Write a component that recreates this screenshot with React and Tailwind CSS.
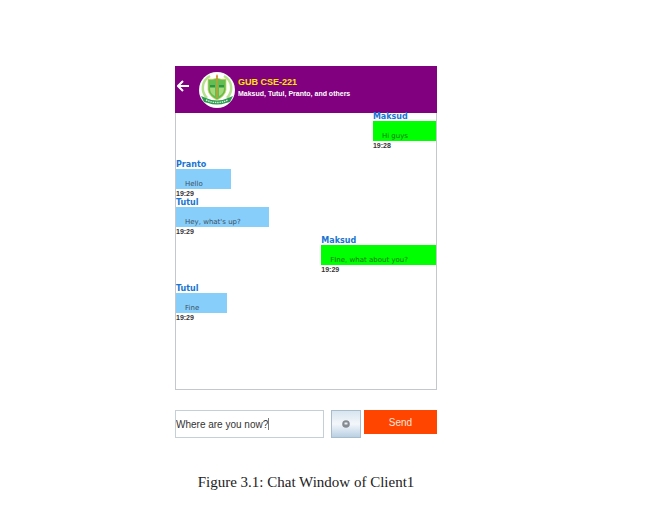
const messages = [
  { author: "Maksud", text: "Hi guys", time: "19:28", own: true },
  { author: "Pranto", text: "Hello", time: "19:29", own: false },
  { author: "Tutul", text: "Hey, what's up?", time: "19:29", own: false },
  { author: "Maksud", text: "FIne, what about you?", time: "19:29", own: true },
  { author: "Tutul", text: "Fine", time: "19:29", own: false },
];

function Crest() {
  return (
    <svg viewBox="0 0 36 36" className="size-9 shrink-0" aria-hidden="true">
      <circle cx="18" cy="18" r="18" fill="#fff" />
      <path d="M11 4C2 9 2 20 8 26" fill="none" stroke="#b5e08c" strokeWidth="2.5" />
      <path d="M25 4C34 9 34 20 28 26" fill="none" stroke="#b5e08c" strokeWidth="2.5" />
      <path d="M9 7Q14 8 18 6Q22 8 27 7V18Q26 24 18 28Q10 24 9 18Z" fill="#63bd50" stroke="#d5d65a" strokeWidth="0.8" />
      <path d="M11 13H16V15H11ZM20 13H25V15H20Z" fill="#2f9448" />
      <path d="M11 16H16V24Q11 22 11 16ZM25 16H20V24Q25 22 25 16Z" fill="#a5d97c" />
      <path d="M17 6H19V26H17Z" fill="#a5a83c" />
      <path d="M18 2Q16 5 18 7Q20 5 18 2Z" fill="#df8a32" />
      <path d="M2 24L7 26Q18 31 29 26L34 24L31 30L27 31Q18 34 9 31L5 30Z" fill="#2c9a4e" />
      <path d="M7 28Q18 33 29 28" fill="none" stroke="#d7efdc" strokeWidth="1.4" strokeDasharray="1.5 0.8" />
    </svg>
  );
}

function Header() {
  return (
    <header className="flex h-[47px] items-center bg-[#800080] pl-0.5">
      <button type="button" aria-label="Back" className="mb-2 mr-2 flex w-3.5 shrink-0 text-white">
        <svg viewBox="0 0 14 14" className="size-3.5" fill="none" stroke="currentColor" strokeWidth="2">
          <path d="M12 7H1M6 2L1 7L6 12" />
        </svg>
      </button>
      <Crest />
      <div className="mb-1 ml-[3px] whitespace-nowrap font-bold">
        <h1 className="text-[9px] leading-[11px] text-[#ffe600]">GUB CSE-221</h1>
        <p className="text-[7px] leading-[11px] text-white">Maksud, Tutul, Pranto, and others</p>
      </div>
    </header>
  );
}

function Message({ author, text, time, own, spaced }) {
  return (
    <li className={`${own ? "self-end" : "self-start"} ${spaced ? "mt-2.5" : ""}`}>
      <p className="font-['DejaVu_Sans',sans-serif] text-[8px] font-bold leading-[8px] text-[#1874d2]">{author}</p>
      <p
        className={`flex h-5 items-end whitespace-nowrap pl-[9px] pr-7 font-['DejaVu_Sans',sans-serif] text-[7px] leading-[10px] ${
          own ? "bg-[#00ff00] text-[#117711]" : "bg-[#87cefa] text-[#3c5266]"
        }`}
      >
        {text}
      </p>
      <time className="block text-[7px] font-bold leading-[10px] text-[#333]">{time}</time>
    </li>
  );
}

export default function App() {
  return (
    <main className="bg-white pb-3 pr-[34px] pt-[66px] font-['Liberation_Sans',Arial,sans-serif]">
      <figure className="mx-auto w-full max-w-[262px]">
        <section aria-label="Group chat">
          <Header />
          <ol className="flex min-h-[277px] flex-col border-x border-b border-[#c3c8cd]">
            {messages.map((message, i) => (
              <Message key={i} {...message} spaced={i === 1 || i === 4} />
            ))}
          </ol>
          <form className="mt-5 flex items-start" onSubmit={(e) => e.preventDefault()}>
            <div className="flex h-7 min-w-0 flex-1 items-center border border-[#c5cfd6] text-[10px]">
              <input
                aria-label="Message"
                type="text"
                defaultValue="Where are you now?"
                className="w-24 text-[#333] outline-none"
              />
              <span className="-ml-1 h-3 w-px bg-[#777]" />
            </div>
            <button
              type="button"
              aria-label="Emoji"
              className="ml-[7px] flex h-7 w-[30px] items-center justify-center border border-[#a8bccb] bg-linear-to-b from-[#d8e5ef] via-[#f3f7fb] to-[#b9d0e3]"
            >
              <svg viewBox="0 0 8 8" className="size-2">
                <circle cx="4" cy="4" r="3.8" fill="#858b91" />
                <path d="M2.5 2.5H5.5V4.5H2.5Z" fill="#e9eff4" />
              </svg>
            </button>
            <button type="submit" className="ml-[3px] h-6 w-[73px] bg-[#ff4500] text-[10px] text-[#ffe5dc]">
              Send
            </button>
          </form>
        </section>
        <figcaption className="mt-[34px] whitespace-nowrap text-center font-['Liberation_Serif','Times_New_Roman',serif] text-[15px] leading-5 text-[#222]">
          Figure 3.1: Chat Window of Client1
        </figcaption>
      </figure>
    </main>
  );
}
